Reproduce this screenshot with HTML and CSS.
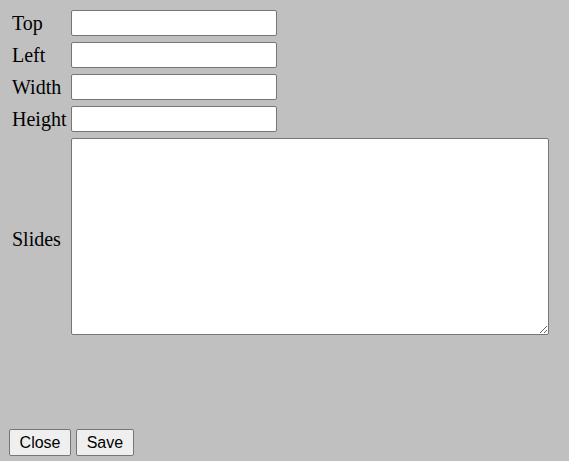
FILE: index.html
```html
<!DOCTYPE html>
<html>
<head>
<meta charset="utf-8">
<link rel="stylesheet" href="styles.css">
</head>
<body>
<div class="page">
  <form class="form">
    <label class="lbl" for="top">Top</label>
    <input class="field" id="top" type="text">
    <label class="lbl" for="left">Left</label>
    <input class="field" id="left" type="text">
    <label class="lbl" for="width">Width</label>
    <input class="field" id="width" type="text">
    <label class="lbl" for="height">Height</label>
    <input class="field" id="height" type="text">
    <label class="lbl lbl-area" for="slides">Slides</label>
    <textarea class="area" id="slides"></textarea>
  </form>
  <div class="buttons">
    <button class="btn" type="button">Close</button>
    <button class="btn" type="button">Save</button>
  </div>
</div>
</body>
</html>
```
FILE: styles.css
```css
html, body {
  margin: 0;
  padding: 0;
}
body {
  background: #c0c0c0;
  width: 569px;
  height: 461px;
  overflow: hidden;
}
.page {
  display: flex;
  flex-direction: column;
  height: 461px;
  box-sizing: border-box;
  padding: 10px 0 0 0;
}
.form {
  display: grid;
  grid-template-columns: 60px 478px;
  row-gap: 6px;
  margin: 0 0 0 11px;
  align-items: center;
}
.lbl {
  font-family: "Liberation Serif", "Times New Roman", serif;
  font-size: 20px;
  color: #000;
  padding-left: 1px;
  line-height: 23px;
}
.lbl-area {
  padding-top: 5px;
}
.field {
  box-sizing: border-box;
  width: 206px;
  height: 26px;
  margin: 0;
  border: 1px solid #767676;
  border-radius: 2px;
  background: #fff;
  padding: 1px 2px;
  font-family: "Liberation Sans", Arial, sans-serif;
  font-size: 13px;
}
.area {
  box-sizing: border-box;
  width: 478px;
  height: 197px;
  margin: 0;
  border: 1px solid #767676;
  border-radius: 2px;
  background: #fff;
  padding: 2px;
  font-family: "Liberation Mono", monospace;
  font-size: 13px;
}
.buttons {
  display: flex;
  gap: 5px;
  margin-top: auto;
  margin-left: 9px;
  margin-bottom: 5px;
}
.btn {
  box-sizing: border-box;
  height: 27px;
  margin: 0;
  padding: 0 9.6px;
  border: 1px solid #767676;
  border-radius: 2px;
  background: #efefef;
  color: #000;
  font-family: "Liberation Sans", Arial, sans-serif;
  font-size: 16px;
}
```
